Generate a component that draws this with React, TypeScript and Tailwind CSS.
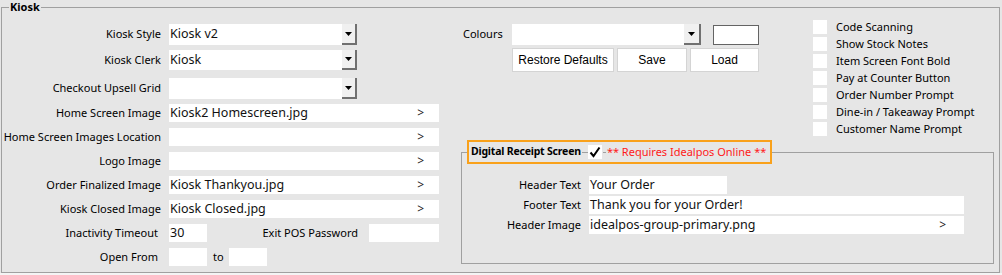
import React from "react";

const F = { fontFamily: '"Noto Sans", "Open Sans", sans-serif' };

function Combo({ value, w, bw }: { value?: string; w: number; bw: number }) {
  return (
    <div className="flex h-full">
      <div
        className="h-full bg-white flex items-center pl-[1px] text-[12.5px] text-[#111]"
        style={{ width: w }}
      >
        {value}
      </div>
      <div
        className="h-full bg-[#f0f0f0] border-r-2 border-b-2 border-[#707070] flex items-center justify-center"
        style={{ width: bw }}
      >
        <svg width="7" height="4" viewBox="0 0 7 4">
          <polygon points="0,0 7,0 3.5,4" fill="#000" />
        </svg>
      </div>
    </div>
  );
}

function PathInput({ value, w, pr }: { value?: string; w: string; pr: string }) {
  return (
    <div className={`${w} h-full bg-white flex items-center pl-[1px] ${pr} text-[12.5px] text-[#111]`}>
      <span className="flex-1">{value}</span>
      <span className="text-[12px] text-[#222]">&gt;</span>
    </div>
  );
}

function Row({
  label,
  children,
  cls,
  lpr = "",
}: {
  label: string;
  children: React.ReactNode;
  cls: string;
  lpr?: string;
}) {
  return (
    <div className={`flex items-center ${cls}`}>
      <div className={`w-[159px] text-right text-[11px] text-black ${lpr}`}>{label}</div>
      <div className="ml-[8px] h-full flex items-center">{children}</div>
    </div>
  );
}

const checks = [
  "Code Scanning",
  "Show Stock Notes",
  "Item Screen Font Bold",
  "Pay at Counter Button",
  "Order Number Prompt",
  "Dine-in / Takeaway Prompt",
  "Customer Name Prompt",
];

export default function App() {
  return (
    <div className="w-[1002px] h-[275px] bg-[#e6e6e6] text-black" style={F}>
      <fieldset className="ml-[1px] w-[999px] h-[273px] border border-[#a0a0a0] min-w-0">
        <legend className="ml-[7px] px-[1px] h-[14px] leading-[14px] text-[11px] font-bold">Kiosk</legend>
        <div className="flex">
          {/* Left column */}
          <div className="w-[438px] flex flex-col">
            <Row label="Kiosk Style" cls="mt-[10px] h-[21px]">
              <Combo value="Kiosk v2" w={173} bw={15} />
            </Row>
            <Row label="Kiosk Clerk" cls="mt-[5px] h-[20px]">
              <Combo value="Kiosk" w={173} bw={15} />
            </Row>
            <Row label="Checkout Upsell Grid" cls="mt-[8px] h-[21px]">
              <Combo w={173} bw={15} />
            </Row>
            <Row label="Home Screen Image" cls="mt-[5px] h-[18px]">
              <PathInput value="Kiosk2 Homescreen.jpg" w="w-[270px]" pr="pr-[15px]" />
            </Row>
            <Row label="Home Screen Images Location" cls="mt-[6px] h-[18px]">
              <PathInput w="w-[270px]" pr="pr-[15px]" />
            </Row>
            <Row label="Logo Image" cls="mt-[6px] h-[18px]">
              <PathInput w="w-[270px]" pr="pr-[15px]" />
            </Row>
            <Row label="Order Finalized Image" cls="mt-[6px] h-[18px]">
              <PathInput value="Kiosk Thankyou.jpg" w="w-[270px]" pr="pr-[15px]" />
            </Row>
            <Row label="Kiosk Closed Image" cls="mt-[6px] h-[18px]">
              <PathInput value="Kiosk Closed.jpg" w="w-[270px]" pr="pr-[15px]" />
            </Row>
            <Row label="Inactivity Timeout" cls="mt-[6px] h-[18px]" lpr="pr-[3px]">
              <div className="w-[38px] h-full bg-white flex items-center pl-[1px] text-[12.5px] text-[#111]">30</div>
              <div className="w-[162px] text-right text-[11px] pr-[11px]">Exit POS Password</div>
              <div className="w-[70px] h-full bg-white" />
            </Row>
            <Row label="Open From" cls="mt-[6px] h-[18px]" lpr="pr-[3px]">
              <div className="w-[38px] h-full bg-white" />
              <div className="w-[22px] pl-[6px] text-[11px]">to</div>
              <div className="w-[38px] h-full bg-white" />
            </Row>
          </div>

          {/* Right region */}
          <div className="ml-[21px] w-[533px] flex flex-col">
            <div className="h-[126px] flex">
              <div className="w-[352px] pt-[10px] flex flex-col">
                <div className="flex items-center h-[21px]">
                  <div className="w-[51px] pl-[2px] text-[11px]">Colours</div>
                  <Combo w={172} bw={17} />
                  <div className="ml-[12px] w-[46px] h-[20px] bg-white border border-[#646464]" />
                </div>
                <div
                  className="mt-[3px] ml-[51px] flex gap-[3px] h-[24px] text-[12px] text-black"
                  style={{ fontFamily: '"Liberation Sans", Arial, sans-serif' }}
                >
                  <div className="w-[102px] bg-white border border-[#d4d4d4] flex items-center justify-center">Restore Defaults</div>
                  <div className="w-[70px] bg-white border border-[#d4d4d4] flex items-center justify-center">Save</div>
                  <div className="w-[69px] bg-white border border-[#d4d4d4] flex items-center justify-center">Load</div>
                </div>
              </div>
              <div className="pt-[6px] flex flex-col gap-[3px]">
                {checks.map((c) => (
                  <div key={c} className="flex items-center h-[14px]">
                    <div className="w-[14px] h-[14px] bg-white" />
                    <div className="ml-[9px] text-[11px] whitespace-nowrap">{c}</div>
                  </div>
                ))}
              </div>
            </div>

            <fieldset className="w-[533px] h-[124px] border border-[#a0a0a0] min-w-0">
              <legend className="ml-[5px] h-[24px] border-2 border-[#f9a11b] flex items-center pl-[2px] pr-[4px]">
                <span className="text-[10.5px] tracking-[-0.2px] font-bold whitespace-nowrap">Digital Receipt Screen</span>
                <span className="w-[6px] h-px bg-[#a0a0a0] ml-[1px]" />
                <span className="w-[14px] h-[14px] bg-white flex items-center justify-center">
                  <svg width="14" height="14" viewBox="0 0 14 14">
                    <path d="M2.5 7.5 L5.5 11 L11.5 2.5" stroke="#000" strokeWidth="2" fill="none" />
                  </svg>
                </span>
                <span className="w-[3px] h-px bg-[#a0a0a0] ml-[1px]" />
                <span className="ml-[1px] text-[11px] text-[#ff1a1a] whitespace-nowrap">** Requires Idealpos Online **</span>
              </legend>
              <div className="flex flex-col">
                <div className="mt-[12px] h-[18px] flex items-center">
                  <div className="w-[119px] text-right text-[11px]">Header Text</div>
                  <div className="ml-[8px] w-[138px] h-full bg-white flex items-center pl-[1px] text-[12.5px] text-[#111]">Your Order</div>
                </div>
                <div className="mt-[2px] h-[18px] flex items-center">
                  <div className="w-[119px] text-right text-[11px]">Footer Text</div>
                  <div className="ml-[8px] w-[375px] h-full bg-white flex items-center pl-[1px] text-[12.5px] text-[#111]">Thank you for your Order!</div>
                </div>
                <div className="mt-[2px] h-[18px] flex items-center">
                  <div className="w-[119px] text-right text-[11px]">Header Image</div>
                  <div className="ml-[8px] h-full">
                    <PathInput value="idealpos-group-primary.png" w="w-[375px]" pr="pr-[18px]" />
                  </div>
                </div>
              </div>
            </fieldset>
          </div>
        </div>
      </fieldset>
      <div className="h-[2px] bg-[#f4f4f4]" />
    </div>
  );
}
